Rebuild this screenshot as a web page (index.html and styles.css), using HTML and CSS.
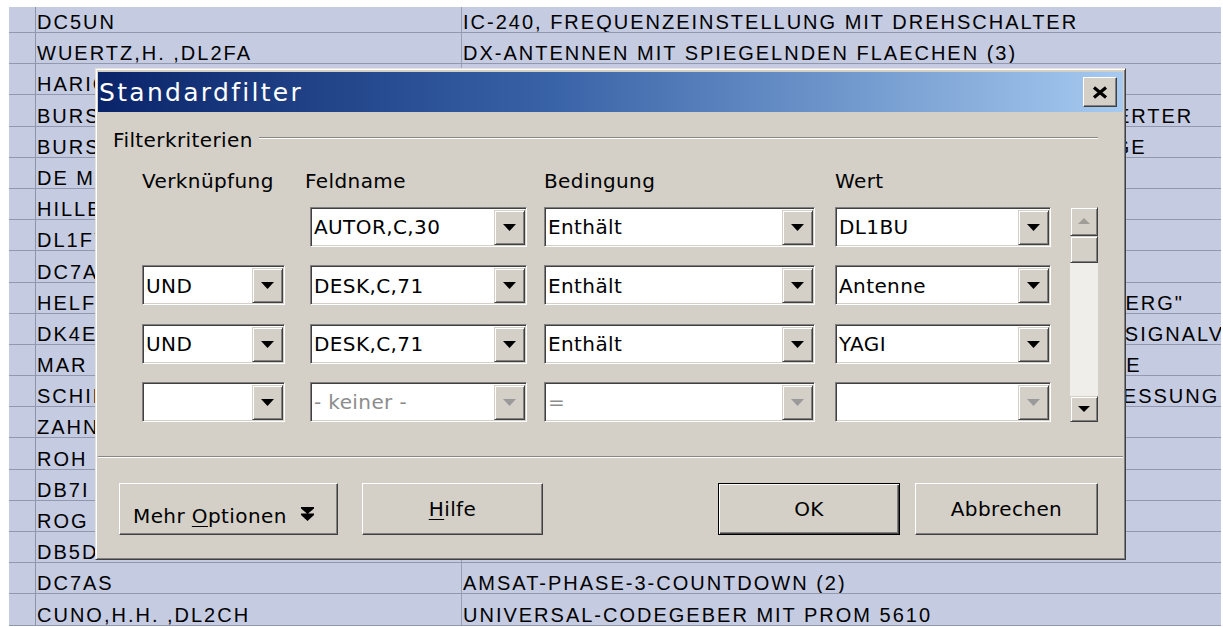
FILE: index.html
```html
<!DOCTYPE html>
<html lang="de">
<head>
<meta charset="utf-8">
<title>Standardfilter</title>
<link rel="stylesheet" href="styles.css">
</head>
<body>
<div class="sheet">
  <div class="row"><div class="hdr"></div><div class="cell a">DC5UN</div><div class="cell b">IC-240, FREQUENZEINSTELLUNG MIT DREHSCHALTER</div></div>
  <div class="row"><div class="hdr"></div><div class="cell a">WUERTZ,H. ,DL2FA</div><div class="cell b">DX-ANTENNEN MIT SPIEGELNDEN FLAECHEN (3)</div></div>
  <div class="row"><div class="hdr"></div><div class="cell a">HARIG,W. ,DL3XY</div><div class="cell b">ANTENNENKOPPLER FUER 160 M</div></div>
  <div class="row"><div class="hdr"></div><div class="cell a">BURSCHKA,H. ,DJ2ZT</div><div class="cell b">RAUSCHARMER 2M-VORVERSTAERKER UND 70-CM-KONVERTER</div></div>
  <div class="row"><div class="hdr"></div><div class="cell a">BURSCHKA,H. ,DJ2ZT</div><div class="cell b">STEUERUNG FUER EINE FERNGESTEUERTE ROTORANLAGE</div></div>
  <div class="row"><div class="hdr"></div><div class="cell a">DE MARTINO,G.</div><div class="cell b">QUARZFILTER IM SELBSTBAU</div></div>
  <div class="row"><div class="hdr"></div><div class="cell a">HILLEBRAND,F. ,DK7LA</div><div class="cell b">LOGARITHMISCH-PERIODISCHE ANTENNE</div></div>
  <div class="row"><div class="hdr"></div><div class="cell a">DL1FY</div><div class="cell b">TRANSVERTER FUER 23 CM</div></div>
  <div class="row"><div class="hdr"></div><div class="cell a">DC7AZ</div><div class="cell b">PEILEMPFAENGER FUER 80 M</div></div>
  <div class="row"><div class="hdr"></div><div class="cell a">HELFRICH,K. ,DL8ZX</div><div class="cell b">BERICHT VOM UKW-DISTRIKTSTREFFEN 1985 IN "NUERNBERG"</div></div>
  <div class="row"><div class="hdr"></div><div class="cell a">DK4EI</div><div class="cell b">EINFACHER TRANSISTOR-PRUEFER MIT ZUSAETZLICHEM SIGNALVERFOLGER</div></div>
  <div class="row"><div class="hdr"></div><div class="cell a">MAR P. ,DF2QR</div><div class="cell b">STABILISIERTES NETZTEIL FUER DIE KW-STATIONSANLAGE</div></div>
  <div class="row"><div class="hdr"></div><div class="cell a">SCHINDLER,O. ,DL4CB</div><div class="cell b">EIN EINFACHES VERFAHREN ZUR ANTENNEN-IMPEDANZMESSUNG</div></div>
  <div class="row"><div class="hdr"></div><div class="cell a">ZAHNER,R. ,DJ6TE</div><div class="cell b">SWR-MESSBRUECKE</div></div>
  <div class="row"><div class="hdr"></div><div class="cell a">ROH U. ,DJ2LR</div><div class="cell b">DIGITALE FREQUENZANZEIGE</div></div>
  <div class="row"><div class="hdr"></div><div class="cell a">DB7I</div><div class="cell b">NF-FILTER FUER CW</div></div>
  <div class="row"><div class="hdr"></div><div class="cell a">ROG H. ,DL9KR</div><div class="cell b">MORSETASTE MIT SPEICHER</div></div>
  <div class="row"><div class="hdr"></div><div class="cell a">DB5DT</div><div class="cell b">VERTIKALSTRAHLER FUER 40 M</div></div>
  <div class="row"><div class="hdr"></div><div class="cell a">DC7AS</div><div class="cell b">AMSAT-PHASE-3-COUNTDOWN (2)</div></div>
  <div class="row"><div class="hdr"></div><div class="cell a">CUNO,H.H. ,DL2CH</div><div class="cell b">UNIVERSAL-CODEGEBER MIT PROM 5610</div></div>
</div>

<div class="dialog">
  <div class="titlebar">
    <span class="title">Standardfilter</span>
    <span class="close">
      <svg width="16" height="13" viewBox="0 0 16 13"><path d="M2 1.5L14 11.5M14 1.5L2 11.5" stroke="#000" stroke-width="3.2" fill="none"/></svg>
    </span>
  </div>

  <div class="content">
    <div class="legend">
      <span class="legend-text">Filterkriterien</span>
      <span class="legend-line"></span>
    </div>

    <div class="grid heads">
      <span class="head c1">Verknüpfung</span>
      <span class="head c3 shift">Feldname</span>
      <span class="head c5">Bedingung</span>
      <span class="head c7">Wert</span>
    </div>

    <div class="grid rows">
      <div class="combo c3 r1"><span class="val">AUTOR,C,30</span><span class="drop"><svg width="13" height="7" viewBox="0 0 13 7"><path d="M0 0H13L6.5 7Z"/></svg></span></div>
      <div class="combo c5 r1"><span class="val">Enthält</span><span class="drop"><svg width="13" height="7" viewBox="0 0 13 7"><path d="M0 0H13L6.5 7Z"/></svg></span></div>
      <div class="combo c7 r1"><span class="val">DL1BU</span><span class="drop"><svg width="13" height="7" viewBox="0 0 13 7"><path d="M0 0H13L6.5 7Z"/></svg></span></div>

      <div class="scroll c9">
        <span class="sbtn up"><svg width="12" height="6" viewBox="0 0 12 6"><path d="M0 6H12L6 0Z"/></svg></span>
        <span class="thumb"></span>
        <span class="track"></span>
        <span class="sbtn down"><svg width="12" height="6" viewBox="0 0 12 6"><path d="M0 0H12L6 6Z"/></svg></span>
      </div>

      <div class="combo c1 r2"><span class="val">UND</span><span class="drop"><svg width="13" height="7" viewBox="0 0 13 7"><path d="M0 0H13L6.5 7Z"/></svg></span></div>
      <div class="combo c3 r2"><span class="val">DESK,C,71</span><span class="drop"><svg width="13" height="7" viewBox="0 0 13 7"><path d="M0 0H13L6.5 7Z"/></svg></span></div>
      <div class="combo c5 r2"><span class="val">Enthält</span><span class="drop"><svg width="13" height="7" viewBox="0 0 13 7"><path d="M0 0H13L6.5 7Z"/></svg></span></div>
      <div class="combo c7 r2"><span class="val">Antenne</span><span class="drop"><svg width="13" height="7" viewBox="0 0 13 7"><path d="M0 0H13L6.5 7Z"/></svg></span></div>

      <div class="combo c1 r3"><span class="val">UND</span><span class="drop"><svg width="13" height="7" viewBox="0 0 13 7"><path d="M0 0H13L6.5 7Z"/></svg></span></div>
      <div class="combo c3 r3"><span class="val">DESK,C,71</span><span class="drop"><svg width="13" height="7" viewBox="0 0 13 7"><path d="M0 0H13L6.5 7Z"/></svg></span></div>
      <div class="combo c5 r3"><span class="val">Enthält</span><span class="drop"><svg width="13" height="7" viewBox="0 0 13 7"><path d="M0 0H13L6.5 7Z"/></svg></span></div>
      <div class="combo c7 r3"><span class="val">YAGI</span><span class="drop"><svg width="13" height="7" viewBox="0 0 13 7"><path d="M0 0H13L6.5 7Z"/></svg></span></div>

      <div class="combo c1 r4"><span class="val"></span><span class="drop"><svg width="13" height="7" viewBox="0 0 13 7"><path d="M0 0H13L6.5 7Z"/></svg></span></div>
      <div class="combo c3 r4 off"><span class="val">- keiner -</span><span class="drop"><svg width="13" height="7" viewBox="0 0 13 7"><path d="M0 0H13L6.5 7Z"/></svg></span></div>
      <div class="combo c5 r4 off"><span class="val">=</span><span class="drop"><svg width="13" height="7" viewBox="0 0 13 7"><path d="M0 0H13L6.5 7Z"/></svg></span></div>
      <div class="combo c7 r4 off"><span class="val"></span><span class="drop"><svg width="13" height="7" viewBox="0 0 13 7"><path d="M0 0H13L6.5 7Z"/></svg></span></div>
    </div>

    <div class="separator"></div>

    <div class="buttons">
      <button class="btn more"><span>Mehr <u>O</u>ptionen</span>
        <svg class="chevrons" width="13" height="14" viewBox="0 0 13 14"><path d="M0 0H13V1.5L6.5 7L0 1.5Z M0 6.5H13V8L6.5 14L0 8Z"/></svg>
      </button>
      <button class="btn help"><span><u>H</u>ilfe</span></button>
      <span class="spacer"></span>
      <button class="btn ok">OK</button>
      <button class="btn cancel">Abbrechen</button>
    </div>
  </div>
</div>
</body>
</html>
```

FILE: styles.css
```css
html, body {
  margin: 0;
  height: 627px;
  overflow: hidden;
  background: #fff;
}

/* ---------- spreadsheet behind the dialog ---------- */
.sheet {
  padding: 7px 2px 0 9px;
  font-family: "Liberation Sans", Arial, sans-serif;
}

.row {
  display: flex;
  height: 31.2px;
  box-sizing: border-box;
  border-bottom: 1px solid #9298ae;
  background: #c5cbe0;
}

.row:first-child {
  height: 26px;
}

.hdr {
  width: 27px;
  flex: none;
  box-sizing: border-box;
  border-right: 1px solid #8d93a9;
}

.cell {
  display: flex;
  align-items: flex-end;
  padding-left: 1px;
  font-size: 20px;
  line-height: 20px;
  letter-spacing: 2px;
  color: #000;
  white-space: nowrap;
  overflow: hidden;
}

.a {
  width: 426px;
  flex: none;
  box-sizing: border-box;
  border-right: 1px solid #9a9fb4;
}

.b {
  flex: 1;
}

/* ---------- dialog window ---------- */
.dialog {
  position: absolute;
  left: 95px;
  top: 68px;
  width: 1031px;
  height: 492px;
  box-sizing: border-box;
  padding: 3px 2px 2px 2px;
  background: #d4d0c8;
  border: 1px solid;
  border-color: #e6e3dd #404040 #404040 #e6e3dd;
  box-shadow: inset 1px 1px #fff, inset -1px -1px #808080;
  font-family: "DejaVu Sans", Verdana, sans-serif;
  font-size: 20px;
  letter-spacing: 0.4px;
  color: #000;
  display: flex;
  flex-direction: column;
}

.titlebar {
  height: 40px;
  flex: none;
  display: flex;
  align-items: center;
  justify-content: space-between;
  background: linear-gradient(90deg, #0a246a 0%, #3a64a8 45%, #a6caf0 100%);
}

.title {
  padding-left: 1px;
  color: #fff;
  font-size: 25px;
  letter-spacing: 2.3px;
}

.close {
  width: 34px;
  height: 30px;
  margin-right: 6px;
  box-sizing: border-box;
  display: flex;
  align-items: center;
  justify-content: center;
  background: #d4d0c8;
  border: 1px solid;
  border-color: #fff #404040 #404040 #fff;
  box-shadow: inset -1px -1px #808080;
}

.content {
  flex: 1;
  display: flex;
  flex-direction: column;
}

/* group heading with etched rule */
.legend {
  display: flex;
  height: 24px;
  margin: 16px 25px 0 15px;
}

.legend-text {
  line-height: 24px;
}

.legend-line {
  flex: 1;
  align-self: flex-start;
  margin: 9px 0 0 6px;
  border-top: 1px solid #8a8782;
  border-bottom: 1px solid #fff;
}

/* criteria grid */
.grid {
  display: grid;
  grid-template-columns: 143px 25px 217px 17px 271px 20px 216px 19px 28px;
  margin-left: 44px;
}

.heads {
  margin-top: 16.7px;
  height: 24px;
  line-height: 24px;
}

.head.shift {
  margin-left: -5px;
}

.rows {
  margin-top: 14.3px;
  grid-template-rows: repeat(4, 40px);
  row-gap: 18.33px;
}

.c1 { grid-column: 1; }
.c3 { grid-column: 3; }
.c5 { grid-column: 5; }
.c7 { grid-column: 7; }
.c9 { grid-column: 9; grid-row: 1 / span 4; }

.r1 { grid-row: 1; }
.r2 { grid-row: 2; }
.r3 { grid-row: 3; }
.r4 { grid-row: 4; }

.combo {
  display: flex;
  height: 40px;
  box-sizing: border-box;
  background: #fff;
  border: 1px solid;
  border-color: #808080 #fff #fff #808080;
  box-shadow: inset 1px 1px #404040, inset -1px -1px #d4d0c8;
  padding: 2px 1px 1px 2px;
}

.val {
  flex: 1;
  display: flex;
  align-items: center;
  padding-left: 1px;
  white-space: nowrap;
  overflow: hidden;
}

.drop {
  width: 31px;
  flex: none;
  box-sizing: border-box;
  display: flex;
  align-items: center;
  justify-content: center;
  background: #d4d0c8;
  border: 1px solid;
  border-color: #d4d0c8 #404040 #404040 #d4d0c8;
  box-shadow: inset 1px 1px #fff, inset -1px -1px #808080;
}

.drop svg { fill: #000; }

.combo.off .val { color: #8c8c8c; }
.combo.off .drop svg { fill: #9a9a9a; }

/* vertical scroll bar */
.scroll {
  display: flex;
  flex-direction: column;
  background: #efeeea;
}

.sbtn, .thumb {
  flex: none;
  box-sizing: border-box;
  display: flex;
  align-items: center;
  justify-content: center;
  background: #d4d0c8;
  border: 1px solid;
  border-color: #d4d0c8 #404040 #404040 #d4d0c8;
  box-shadow: inset 1px 1px #fff, inset -1px -1px #808080;
}

.sbtn.up { height: 29px; }
.sbtn.up svg { fill: #a09d97; }
.thumb { height: 27px; }
.track { flex: 1; }
.sbtn.down { height: 26px; }
.sbtn.down svg { fill: #000; }

/* bottom rule and buttons */
.separator {
  margin-top: 34px;
  border-top: 1px solid #8a8782;
  border-bottom: 1px solid #fff;
}

.buttons {
  display: flex;
  margin: 25px 25px 0 21px;
  height: 52px;
}

.btn {
  height: 52px;
  box-sizing: border-box;
  padding: 0;
  font: inherit;
  letter-spacing: inherit;
  color: #000;
  background: #d4d0c8;
  border: 1px solid;
  border-color: #fff #404040 #404040 #fff;
  box-shadow: inset -1px -1px #808080;
  display: flex;
  align-items: center;
  justify-content: center;
}

.btn u {
  text-decoration-thickness: 1px;
  text-underline-offset: 3px;
}

.more {
  width: 219px;
  justify-content: flex-start;
  padding: 14px 0 0 13px;
  gap: 14px;
}

.chevrons {
  margin-top: -4px;
}

.help { width: 181px; margin-left: 24px; }
.spacer { flex: 1; }

.ok {
  width: 182px;
  border: 1px solid #000;
  box-shadow: inset 1px 1px #fff, inset -1px -1px #404040, inset -2px -2px #808080;
}

.cancel { width: 183px; margin-left: 15px; }
```
